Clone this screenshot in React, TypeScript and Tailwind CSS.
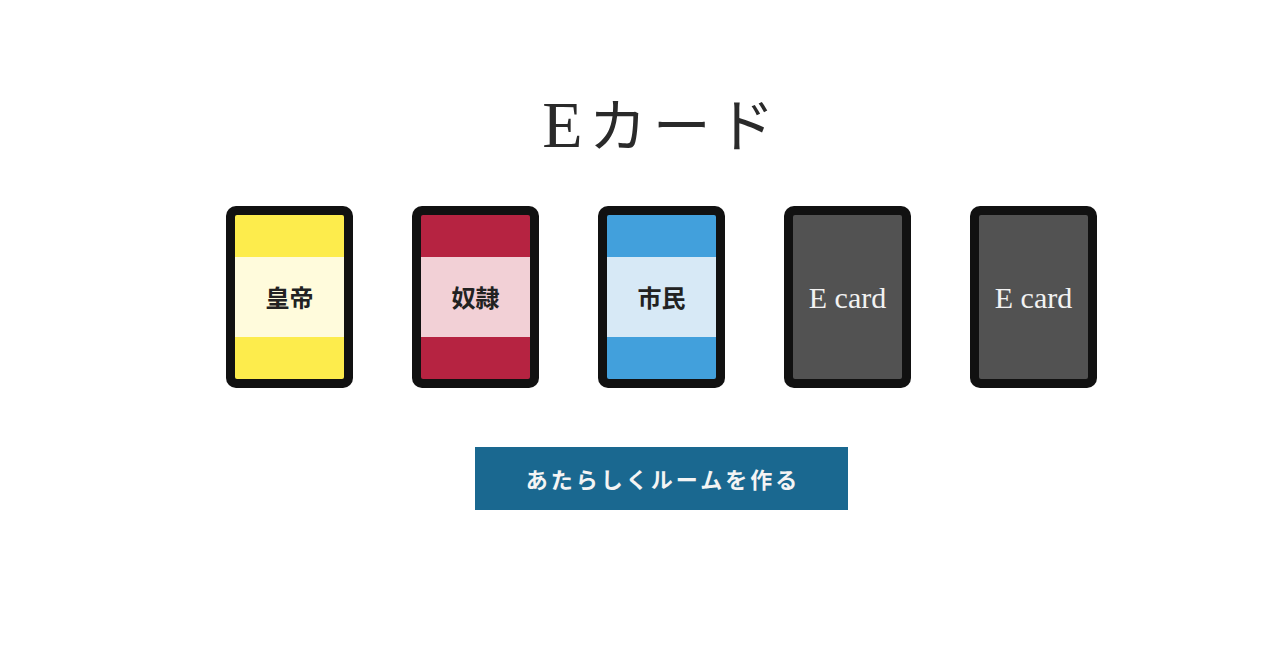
const serif = { fontFamily: '"Liberation Serif", "Noto Sans CJK JP", serif' };

type Face = { label: string; band: string; mid: string };

const faces: Face[] = [
  { label: '皇帝', band: 'bg-[#fdec4c]', mid: 'bg-[#fffbdc]' },
  { label: '奴隷', band: 'bg-[#b62341]', mid: 'bg-[#f2d0d6]' },
  { label: '市民', band: 'bg-[#42a0dc]', mid: 'bg-[#d7e9f6]' },
];

function FaceCard({ face }: { face: Face }) {
  return (
    <div className="w-[127px] h-[182px] rounded-[10px] bg-[#111] p-[9px]">
      <div className="flex h-full flex-col overflow-hidden rounded-[2px]">
        <div className={`h-[42px] ${face.band}`} />
        <div className={`flex h-[80px] items-center justify-center ${face.mid}`}>
          <span
            className="text-[24px] font-bold text-[#222]"
            style={{ fontFamily: '"Noto Sans CJK JP", serif' }}
          >
            {face.label}
          </span>
        </div>
        <div className={`flex-1 ${face.band}`} />
      </div>
    </div>
  );
}

function BackCard() {
  return (
    <div className="w-[127px] h-[182px] rounded-[10px] bg-[#111] p-[9px]">
      <div className="flex h-full items-center justify-center rounded-[2px] bg-[#525252]">
        <span className="text-[30px] text-[#f2f2f2]" style={serif}>
          E card
        </span>
      </div>
    </div>
  );
}

export default function App() {
  return (
    <div className="flex min-h-screen flex-col items-center bg-white pl-[43px]">
      <h1
        className="mt-[85px] text-[58px] leading-[80px] tracking-[6px] text-[#2a2a2a]"
        style={serif}
      >
        <span className="text-[66px]">E</span>カード
      </h1>

      <div className="mt-[38px] flex gap-[59px]">
        {faces.map((f) => (
          <FaceCard key={f.label} face={f} />
        ))}
        <BackCard />
        <BackCard />
      </div>

      <button
        className="mt-[59px] flex h-[63px] w-[373px] items-center justify-center bg-[#1a6890] pl-[3px] text-[22px] font-bold tracking-[3px] text-[#f4f4f4]"
        style={{ fontFamily: '"Noto Sans CJK JP", sans-serif' }}
      >
        あたらしくルームを作る
      </button>
    </div>
  );
}
